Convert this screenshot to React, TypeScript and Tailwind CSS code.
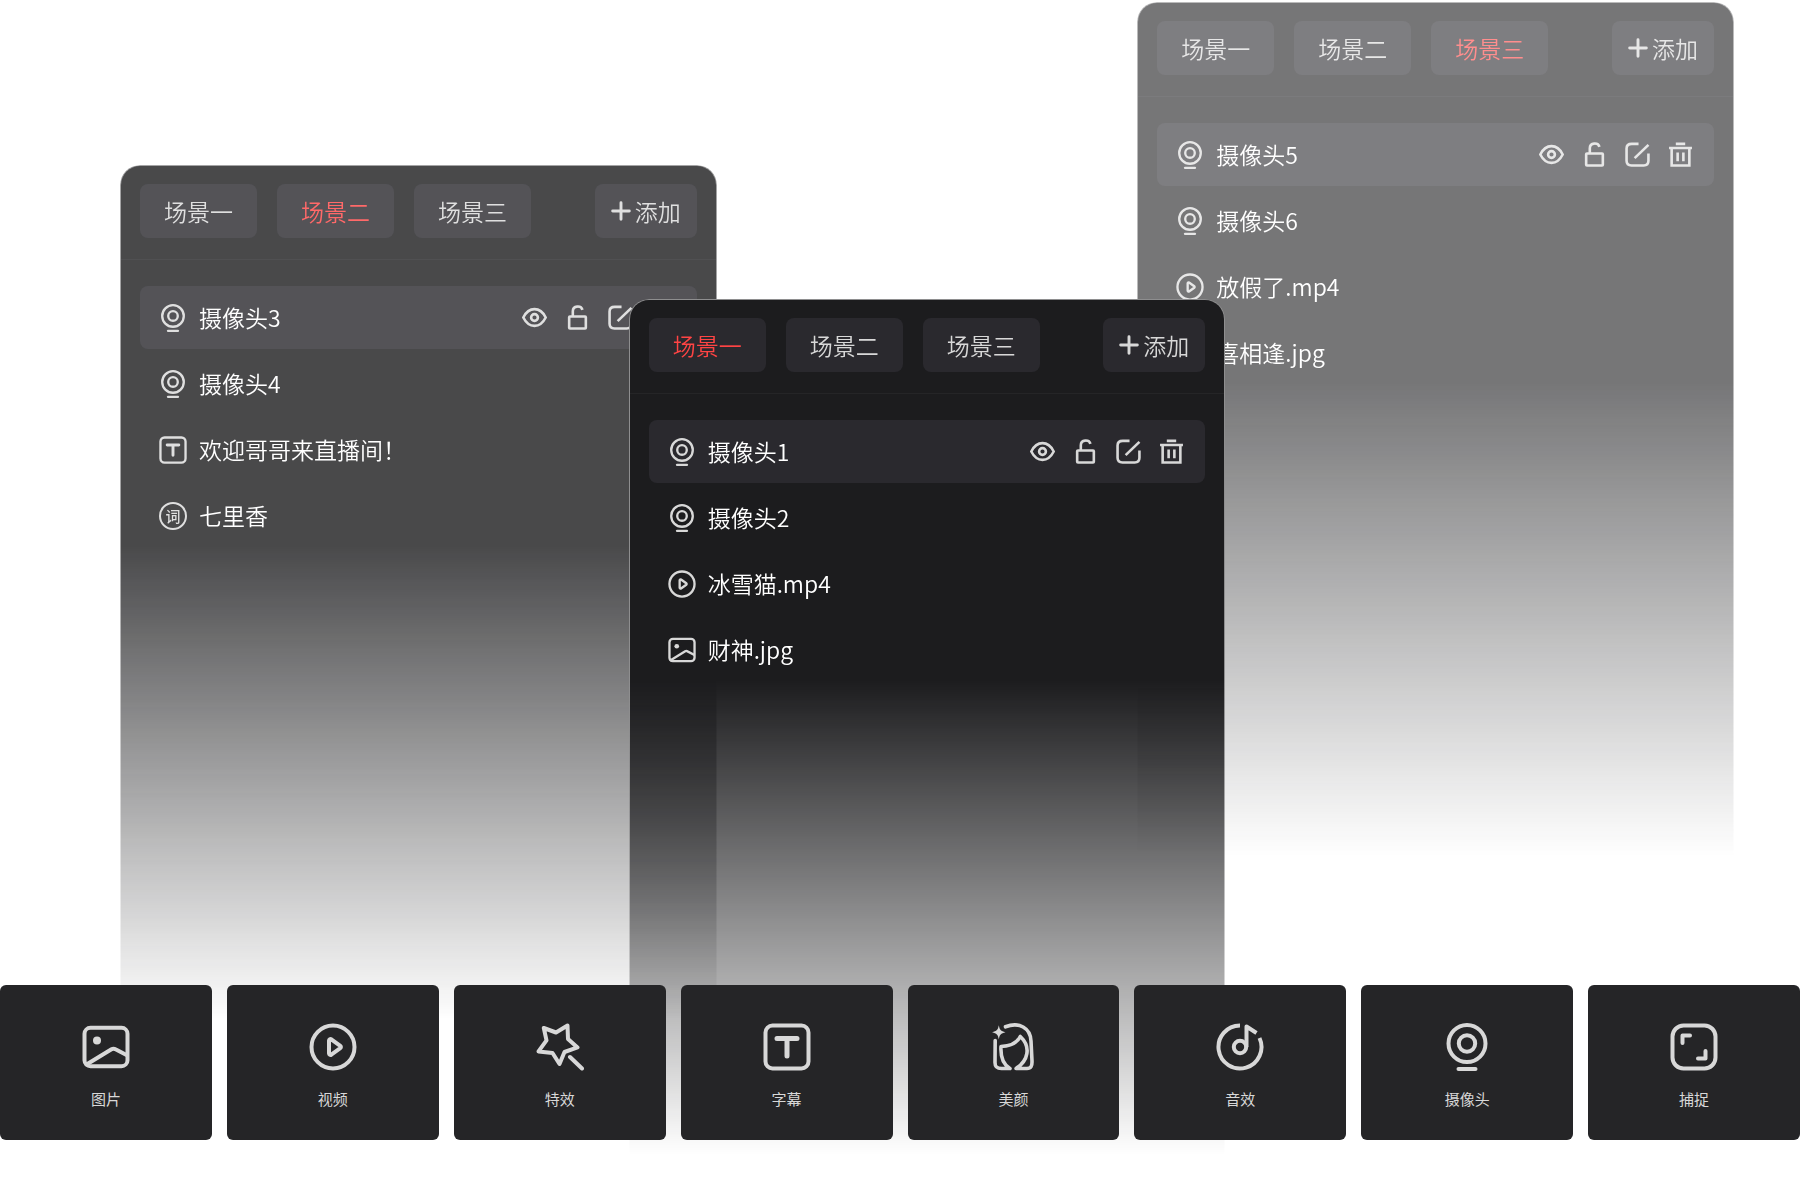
import { useState } from "react";
import type { ReactNode } from "react";

type IconProps = { className?: string };

function Icon({ className, children, strokeWidth = 4 }: IconProps & { children: ReactNode; strokeWidth?: number }) {
  return (
    <svg
      viewBox="0 0 48 48"
      className={className}
      fill="none"
      stroke="currentColor"
      strokeWidth={strokeWidth}
      strokeLinecap="round"
      strokeLinejoin="round"
      aria-hidden="true"
    >
      {children}
    </svg>
  );
}

const ImageIcon = ({ className }: IconProps) => (
  <Icon className={className}>
    <rect x="2.5" y="4.8" width="43" height="38.4" rx="6" />
    <circle cx="15" cy="17.5" r="4" fill="currentColor" stroke="none" />
    <path d="M4.500 41.500 29.500 26.300a4 4 0 0 1 4 0L44.500 32" />
  </Icon>
);

const VideoIcon = ({ className }: IconProps) => (
  <Icon className={className}>
    <circle cx="24" cy="24" r="21.5" />
    <path d="M20 17.500v13a1.500 1.500 0 0 0 2.300 1.200l9-6.500a1.500 1.500 0 0 0 0-2.400l-9-6.500a1.500 1.500 0 0 0-2.300 1.200Z" />
  </Icon>
);

const EffectIcon = ({ className }: IconProps) => (
  <Icon className={className}>
    <path d="M7.800 5 20 9.500 31.500 2.500 32 16 41.500 24.400 28.500 29 23.500 41 16.500 30 2.500 28.400 10.500 17.400Z" />
    <path d="M34 34 46 45.500" />
  </Icon>
);

const TextIcon = ({ className }: IconProps) => (
  <Icon className={className}>
    <rect x="2.5" y="2.5" width="43" height="43" rx="7" />
    <path d="M14 15.500h20M24 15.500V33" strokeWidth="5" />
  </Icon>
);

const BeautyIcon = ({ className }: IconProps) => (
  <Icon className={className} strokeWidth={3.6}>
    <path
      d="M9.800 2.300c.9 4.700 2 5.900 6.700 7-4.700 1.100-5.800 2.300-6.700 7-.9-4.700-2-5.900-6.700-7 4.700-1.100 5.800-2.300 6.700-7Z"
      fill="currentColor"
      stroke="none"
    />
    <path d="M16.500 3.800C30-1.500 41.500 5 42 18L43 38c.2 5-1 7.500-5 7.500H27C39 38 42.500 24 31.300 13.500 28 20 22 23 12 23.500 11.500 32 13 41 21 45.500H12.500c-4.500 0-6.500-1.500-6.500-6L6.200 17.500" />
  </Icon>
);

const MusicIcon = ({ className }: IconProps) => (
  <Icon className={className}>
    <path d="M24 2.500A21.500 21.500 0 1 0 43.500 15" strokeLinecap="butt" />
    <circle cx="24" cy="24" r="6.2" />
    <path d="M30.500 24V3.500L40.500 10" strokeLinecap="butt" />
  </Icon>
);

const CameraIcon = ({ className }: IconProps) => (
  <Icon className={className}>
    <circle cx="24" cy="20.5" r="18.5" />
    <circle cx="24" cy="20.5" r="8.2" />
    <path d="M15.500 46h17" />
  </Icon>
);

const CaptureIcon = ({ className }: IconProps) => (
  <Icon className={className}>
    <rect x="2.5" y="2.5" width="43" height="43" rx="11" />
    <path d="M12.500 20v-7.500H20M28 35.500h7.500V28" />
  </Icon>
);

const LyricsIcon = ({ className }: IconProps) => (
  <span className={`${className} flex items-center justify-center rounded-full border-2 border-current text-[15px] leading-none font-medium`}>
    词
  </span>
);

const EyeIcon = ({ className }: IconProps) => (
  <Icon className={className} strokeWidth={5}>
    <path d="M2.500 24C8 13 15 8 24 8s16 5 21.500 16C40 35 33 40 24 40S8 35 2.500 24Z" />
    <circle cx="24" cy="24" r="6.5" />
  </Icon>
);

const UnlockIcon = ({ className }: IconProps) => (
  <Icon className={className} strokeWidth={5}>
    <rect x="8" y="22" width="32" height="23" rx="1.5" />
    <path d="M15 21V12c0-11 16-12 18.500-2.500" strokeLinecap="butt" />
  </Icon>
);

const EditIcon = ({ className }: IconProps) => (
  <Icon className={className} strokeWidth={5}>
    <path d="M26 3.500H13c-6 0-10 3-10 9V36c0 6 4 9 9.500 9H36c6 0 9-3 9-9V22" strokeLinecap="butt" />
    <path d="M18.500 31 45 5.500" strokeLinecap="butt" />
  </Icon>
);

const TrashIcon = ({ className }: IconProps) => (
  <Icon className={className} strokeWidth={5}>
    <path d="M15 3.500h18M2 11.500h44M7 12v33h34V12M18.500 20v17M29.500 20v17" strokeLinecap="butt" strokeLinejoin="miter" />
  </Icon>
);

const PlusIcon = ({ className }: IconProps) => (
  <Icon className={className} strokeWidth={7}>
    <path d="M24 4v40M4 24h40" />
  </Icon>
);

type Source = { name: string; icon: (props: IconProps) => ReactNode };

const SCENES = ["场景一", "场景二", "场景三"];

const ACTIONS = [
  { label: "显示", icon: EyeIcon },
  { label: "解锁", icon: UnlockIcon },
  { label: "编辑", icon: EditIcon },
  { label: "删除", icon: TrashIcon },
];

const PANELS: { scene: number; className: string; sources: Source[] }[] = [
  {
    scene: 1,
    className: "mt-[165px] opacity-80",
    sources: [
      { name: "摄像头3", icon: CameraIcon },
      { name: "摄像头4", icon: CameraIcon },
      { name: "欢迎哥哥来直播间！", icon: TextIcon },
      { name: "七里香", icon: LyricsIcon },
    ],
  },
  {
    scene: 0,
    className: "z-10 mt-[299px] -ml-[88px]",
    sources: [
      { name: "摄像头1", icon: CameraIcon },
      { name: "摄像头2", icon: CameraIcon },
      { name: "冰雪猫.mp4", icon: VideoIcon },
      { name: "财神.jpg", icon: ImageIcon },
    ],
  },
  {
    scene: 2,
    className: "mt-[2px] -ml-[88px] opacity-60",
    sources: [
      { name: "摄像头5", icon: CameraIcon },
      { name: "摄像头6", icon: CameraIcon },
      { name: "放假了.mp4", icon: VideoIcon },
      { name: "喜相逢.jpg", icon: ImageIcon },
    ],
  },
];

const TOOLS: Source[] = [
  { name: "图片", icon: ImageIcon },
  { name: "视频", icon: VideoIcon },
  { name: "特效", icon: EffectIcon },
  { name: "字幕", icon: TextIcon },
  { name: "美颜", icon: BeautyIcon },
  { name: "音效", icon: MusicIcon },
  { name: "摄像头", icon: CameraIcon },
  { name: "捕捉", icon: CaptureIcon },
];

function ScenePanel({ scene, sources, className }: { scene: number; sources: Source[]; className: string }) {
  const [active, setActive] = useState(scene);

  return (
    <section
      className={`relative flex-1 rounded-t-[20px] border border-b-0 border-white/50 bg-[#1c1c1e] pb-[474px] text-[23px] font-[350] [mask-image:linear-gradient(black_calc(100%-475px),transparent)] ${className}`}
    >
      <header className="flex items-center gap-5 border-b border-[#252527] px-[19px] pt-[18px] pb-[21px] text-[#d8d8d8]">
        {SCENES.map((name, idx) => (
          <button
            key={name}
            type="button"
            onClick={() => setActive(idx)}
            className={`h-[54px] w-[117px] rounded-lg bg-[#2a292e] ${idx === active ? "text-[#ff4444]" : ""}`}
          >
            {name}
          </button>
        ))}
        <button type="button" className="ml-auto flex h-[54px] w-[102px] items-center justify-center gap-1 rounded-lg bg-[#2a292e]">
          <PlusIcon className="h-5 w-5" />
          添加
        </button>
      </header>

      <ul className="mt-[26px] flex flex-col gap-[3px] px-[19px]">
        {sources.map(({ name, icon: SourceIcon }, idx) => (
          <li key={name} className={`flex h-[63px] items-center rounded-lg pr-[21px] pl-[19px] ${idx === 0 ? "bg-[#2a292e]" : ""}`}>
            <SourceIcon className="h-7 w-7 text-[#d8d8d8]" />
            <span className="ml-3 text-white">{name}</span>
            {idx === 0 && (
              <div className="ml-auto flex gap-[18px] text-[#d8d8d8]">
                {ACTIONS.map(({ label, icon: ActionIcon }) => (
                  <button key={label} type="button" aria-label={label}>
                    <ActionIcon className="h-[25px] w-[25px]" />
                  </button>
                ))}
              </div>
            )}
          </li>
        ))}
      </ul>
    </section>
  );
}

export default function App() {
  return (
    <main className="min-h-screen bg-white pb-[60px] font-['Noto_Sans_CJK_SC',sans-serif]">
      <div className="flex items-start pr-[66px] pl-[120px]">
        {PANELS.map((panel) => (
          <ScenePanel key={panel.scene} {...panel} />
        ))}
      </div>

      <nav className="relative z-20 -mt-[170px] grid grid-cols-8 gap-[15px]">
        {TOOLS.map(({ name, icon: ToolIcon }) => (
          <button
            key={name}
            type="button"
            className="flex h-[155px] flex-col items-center rounded-md bg-[#252527] pt-[38px] text-[15px] text-[#d8d8d8]"
          >
            <ToolIcon className="h-12 w-12" />
            <span className="mt-[17px]">{name}</span>
          </button>
        ))}
      </nav>
    </main>
  );
}
